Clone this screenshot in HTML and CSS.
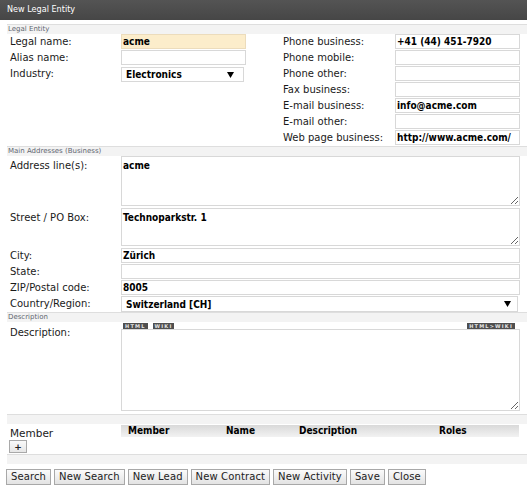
FILE: index.html
```html
<!DOCTYPE html>
<html>
<head>
<meta charset="utf-8">
<title>New Legal Entity</title>
<link rel="stylesheet" href="styles.css">
</head>
<body>
<div class="titlebar">New Legal Entity</div>
<div class="content">
  <div class="sechead">Legal Entity</div>
  <div class="cols">
    <div class="col col-left">
      <div class="row"><span class="lbl">Legal name:</span><input class="fld req" value="acme"></div>
      <div class="row"><span class="lbl">Alias name:</span><input class="fld" value=""></div>
      <div class="row"><span class="lbl">Industry:</span><div class="sel sel-ind"><span class="selval">Electronics</span><svg class="arrow" width="7" height="6" viewBox="0 0 7 6"><polygon points="0,0 7,0 3.5,6" fill="#000"/></svg></div></div>
    </div>
    <div class="col col-right">
      <div class="row"><span class="lbl lbl-r">Phone business:</span><input class="fld" value="+41 (44) 451-7920"></div>
      <div class="row"><span class="lbl lbl-r">Phone mobile:</span><input class="fld" value=""></div>
      <div class="row"><span class="lbl lbl-r">Phone other:</span><input class="fld" value=""></div>
      <div class="row"><span class="lbl lbl-r">Fax business:</span><input class="fld" value=""></div>
      <div class="row"><span class="lbl lbl-r">E-mail business:</span><input class="fld" value="info@acme.com"></div>
      <div class="row"><span class="lbl lbl-r">E-mail other:</span><input class="fld" value=""></div>
      <div class="row"><span class="lbl lbl-r">Web page business:</span><input class="fld" value="http://www.acme.com/"></div>
    </div>
  </div>

  <div class="sechead">Main Addresses (Business)</div>
  <div class="addr">
    <div class="row row-ta ta-addr"><span class="lbl lbl-top">Address line(s):</span><textarea class="ta ta-50">acme</textarea></div>
    <div class="row row-ta ta-street"><span class="lbl lbl-top">Street / PO Box:</span><textarea class="ta ta-38">Technoparkstr. 1</textarea></div>
    <div class="row"><span class="lbl">City:</span><input class="fld wide" value="Zürich"></div>
    <div class="row"><span class="lbl">State:</span><input class="fld wide" value=""></div>
    <div class="row"><span class="lbl">ZIP/Postal code:</span><input class="fld wide" value="8005"></div>
    <div class="row row-sel"><span class="lbl">Country/Region:</span><div class="sel sel-country"><span class="selval">Switzerland [CH]</span><svg class="arrow" width="7" height="6" viewBox="0 0 7 6"><polygon points="0,0 7,0 3.5,6" fill="#000"/></svg></div></div>
  </div>

  <div class="sechead">Description</div>
  <div class="desc">
    <span class="lbl lbl-desc">Description:</span>
    <div class="descfield">
      <div class="toolbar">
        <div class="tbgroup"><span class="tb">HTML</span><span class="tb">WIKI</span></div>
        <span class="tb">HTML&gt;WIKI</span>
      </div>
      <textarea class="ta ta-82"></textarea>
    </div>
  </div>

  <div class="sechead sechead-empty"></div>
  <div class="member">
    <div class="memleft">
      <div class="memlbl">Member</div>
      <button class="plus">+</button>
    </div>
    <div class="mtable">
      <div class="mhead"><span>Member</span><span>Name</span><span>Description</span><span>Roles</span></div>
    </div>
  </div>
  <div class="sechead sechead-empty"></div>

  <div class="buttons">
    <button class="btn">Search</button>
    <button class="btn">New Search</button>
    <button class="btn">New Lead</button>
    <button class="btn">New Contract</button>
    <button class="btn">New Activity</button>
    <button class="btn">Save</button>
    <button class="btn">Close</button>
  </div>
</div>
</body>
</html>
```
FILE: styles.css
```css
html, body {
  margin: 0;
  padding: 0;
  background: #fff;
}
body {
  font-family: "DejaVu Sans", "Verdana", sans-serif;
  font-size: 10px;
  color: #1a1a1a;
}
.titlebar {
  height: 20px;
  line-height: 19px;
  padding-left: 7px;
  background: linear-gradient(#545454, #464646);
  color: #fff;
  font-family: "DejaVu Sans Condensed", "DejaVu Sans", sans-serif;
  font-stretch: condensed;
  font-size: 9px;
}
.content {
  margin: 4px 0 0 7px;
}
.sechead {
  border-top: 1px solid #dedede;
  background: #f3f3f3;
  height: 9px;
  line-height: 9px;
  font-size: 7px;
  color: #5f6670;
  padding-left: 1px;
  overflow: hidden;
}
.cols {
  display: flex;
  padding-left: 3px;
}
.col {
  display: flex;
  flex-direction: column;
}
.col-left {
  width: 273px;
}
.row {
  display: flex;
  height: 16px;
  align-items: flex-start;
}
.lbl {
  display: block;
  width: 111px;
  flex: none;
  line-height: 15px;
  white-space: nowrap;
}
.lbl-r {
  width: 112px;
}
.fld {
  box-sizing: border-box;
  width: 125px;
  height: 15px;
  margin: 0;
  padding: 0 1px;
  border: 1px solid #d8d8d8;
  background: #fff;
  font-family: "DejaVu Sans Condensed", "DejaVu Sans", sans-serif;
  font-stretch: condensed;
  font-weight: bold;
  font-size: 10px;
  color: #000;
  outline: none;
}
.req {
  background: #fcedcb;
  border-color: #ecdcbc;
}
.sel {
  box-sizing: border-box;
  height: 15px;
  border: 1px solid #d8d8d8;
  background: #fff;
  display: flex;
  align-items: center;
  justify-content: space-between;
  padding: 0 10px 0 4px;
  font-family: "DejaVu Sans Condensed", "DejaVu Sans", sans-serif;
  font-stretch: condensed;
  font-weight: bold;
  font-size: 10px;
  color: #000;
}
.sel-ind {
  width: 123px;
  margin-top: 1px;
  padding-right: 9px;
}
.arrow {
  display: block;
}
.addr {
  padding-left: 3px;
  display: flex;
  flex-direction: column;
}
.row-ta {
  height: auto;
}
.ta-addr {
  margin-bottom: 2px;
}
.ta-street {
  margin-bottom: 2px;
}
.lbl-top {
  padding-top: 2px;
}
.ta {
  box-sizing: border-box;
  display: block;
  width: 399px;
  margin: 0;
  padding: 2px 1px;
  border: 1px solid #d8d8d8;
  background: #fff;
  font-family: "DejaVu Sans Condensed", "DejaVu Sans", sans-serif;
  font-stretch: condensed;
  font-weight: bold;
  font-size: 10px;
  line-height: 13px;
  color: #000;
  resize: vertical;
  outline: none;
}
.ta-50 { height: 50px; }
.ta-38 { height: 38px; }
.ta-82 { height: 82px; }
.wide {
  width: 399px;
}
.row-sel {
  height: 16px;
}
.sel-country {
  width: 397px;
  height: 16px;
  padding-right: 6px;
}
.desc {
  display: flex;
  padding-left: 3px;
  height: 91px;
}
.lbl-desc {
  padding-top: 3px;
}
.descfield {
  width: 399px;
  display: flex;
  flex-direction: column;
}
.toolbar {
  height: 7px;
  display: flex;
  justify-content: space-between;
  align-items: center;
  padding: 0 5px 0 2px;
}
.tbgroup {
  display: flex;
  gap: 5px;
}
.tb {
  display: block;
  background: #4f4f4f;
  color: #e4e4e4;
  font-family: "DejaVu Sans", sans-serif;
  font-weight: bold;
  font-size: 5px;
  line-height: 6px;
  height: 6px;
  padding: 0 2px;
  letter-spacing: 1.2px;
  overflow: hidden;
}
.sechead-empty {
  margin-top: 1px;
}
.member {
  display: flex;
  height: 29px;
  padding-left: 3px;
}
.memleft {
  width: 111px;
  flex: none;
}
.memlbl {
  margin-top: 2px;
  height: 14px;
  line-height: 14px;
  font-size: 10.5px;
}
.plus {
  display: block;
  box-sizing: border-box;
  width: 18px;
  height: 13px;
  margin: 0 0 0 -1px;
  padding: 0;
  border: 1px solid #a9a9a9;
  background: linear-gradient(#fafafa, #e6e6e6);
  font-family: "DejaVu Sans", sans-serif;
  font-weight: bold;
  font-size: 9px;
  line-height: 10px;
  color: #222;
}
.mtable {
  width: 398px;
  padding-top: 1px;
}
.mhead {
  display: grid;
  grid-template-columns: 98px 73px 140px auto;
  height: 12px;
  line-height: 12px;
  background: linear-gradient(#d9d9d9, #f2f2f2);
  font-family: "DejaVu Sans Condensed", "DejaVu Sans", sans-serif;
  font-stretch: condensed;
  font-weight: bold;
  font-size: 10px;
  color: #000;
}
.mhead span {
  padding-left: 7px;
}
.buttons {
  display: flex;
  gap: 3px;
  margin: 5px 0 0 -1px;
}
.btn {
  box-sizing: border-box;
  height: 16px;
  margin: 0;
  padding: 0 4px;
  border: 1px solid #a8a8a8;
  background: linear-gradient(#fbfbfb, #e3e3e3);
  font-family: "DejaVu Sans", sans-serif;
  font-size: 10px;
  letter-spacing: 0.12px;
  line-height: 14px;
  color: #222;
}
```
